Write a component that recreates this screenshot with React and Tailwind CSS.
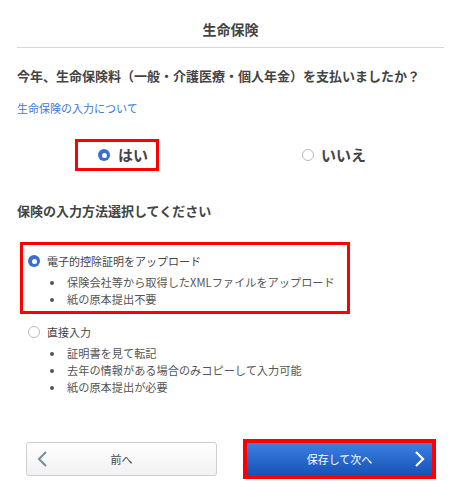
import React, { useState } from "react";

function Radio({ checked }) {
  return checked ? (
    <span className="inline-flex h-[12px] w-[12px] shrink-0 items-center justify-center rounded-full bg-[#3a6fd2]">
      <span className="h-[5px] w-[5px] rounded-full bg-white" />
    </span>
  ) : (
    <span className="inline-block h-[12px] w-[12px] shrink-0 rounded-full border border-[#b9b9b9] bg-white" />
  );
}

function Bullets({ items }) {
  return (
    <ul className="mt-[5px]">
      {items.map((t) => (
        <li key={t} className="flex h-[17px] items-center text-[11.2px] text-[#555]">
          <span className="ml-[30px] mr-[13px] h-[4px] w-[4px] rounded-full bg-[#555]" />
          {t}
        </li>
      ))}
    </ul>
  );
}

export default function App() {
  const [paid, setPaid] = useState(true);
  const [method, setMethod] = useState("upload");

  return (
    <div className="h-[485px] w-[450px] overflow-hidden bg-white font-['Noto_Sans_CJK_JP',sans-serif] text-[#444]">
      {/* header */}
      <div className="ml-[17px] mr-[6px] border-b border-[#d6d6d6] pt-[19px] pb-[8px] text-center">
        <h1 className="text-[14px] leading-[20px] font-bold">生命保険</h1>
      </div>

      <div className="px-[17px]">
        <p className="mt-[18px] text-[13px] leading-[20px] font-bold">
          今年、生命保険料（一般・介護医療・個人年金）を支払いましたか？
        </p>
        <a className="mt-[14px] block text-[11px] leading-[16px] text-[#3b78d8]">
          生命保険の入力について
        </a>
      </div>

      {/* yes / no */}
      <div className="mt-[23px] flex items-center">
        <button
          onClick={() => setPaid(true)}
          className="ml-[75px] flex h-[32px] w-[84px] items-center gap-[8px] border-[3px] border-[#ff0000] pl-[20px]"
        >
          <Radio checked={paid} />
          <span className="text-[15px] font-bold">はい</span>
        </button>
        <button onClick={() => setPaid(false)} className="ml-[143px] flex items-center gap-[7px]">
          <Radio checked={!paid} />
          <span className="text-[15px] font-bold">いいえ</span>
        </button>
      </div>

      <p className="mx-[17px] mt-[31px] text-[13px] leading-[18px] font-bold">
        保険の入力方法選択してください
      </p>

      {/* method */}
      <div
        onClick={() => setMethod("upload")}
        className="mt-[22px] ml-[20px] h-[72px] w-[330px] border-[3px] border-[#ff0000] pt-[8px]"
      >
        <div className="flex h-[16px] items-center gap-[7px] pl-[5px] text-[11px] text-[#444]">
          <Radio checked={method === "upload"} />
          電子的控除証明をアップロード
        </div>
        <div className="-ml-[3px]">
          <Bullets items={["保険会社等から取得したXMLファイルをアップロード", "紙の原本提出不要"]} />
        </div>
      </div>

      <div onClick={() => setMethod("manual")} className="mt-[10px] ml-[23px]">
        <div className="flex h-[16px] items-center gap-[7px] pl-[5px] text-[11px] text-[#444]">
          <Radio checked={method === "manual"} />
          直接入力
        </div>
        <div className="mt-[1px] -ml-[3px]">
          <Bullets
            items={["証明書を見て転記", "去年の情報がある場合のみコピーして入力可能", "紙の原本提出が必要"]}
          />
        </div>
      </div>

      {/* buttons */}
      <div className="mt-[43px] flex items-center">
        <button className="relative ml-[26px] h-[34px] w-[191px] rounded-[3px] border border-[#cfcfcf] bg-gradient-to-b from-white to-[#f0f1f3] text-[11px] text-[#444]">
          <svg
            className="absolute top-1/2 left-[10px] -translate-y-1/2"
            width="11"
            height="16"
            viewBox="0 0 11 16"
            fill="none"
            stroke="#7d8a99"
            strokeWidth="2"
          >
            <path d="M9 1 L2 8 L9 15" />
          </svg>
          前へ
        </button>
        <div className="ml-[26px] border-[4px] border-[#ff0000]">
          <button className="relative h-[32px] w-[185px] bg-gradient-to-b from-[#3c80e4] to-[#1653b6] text-[11px] text-white">
            保存して次へ
            <svg
              className="absolute top-1/2 right-[7px] -translate-y-1/2"
              width="11"
              height="16"
              viewBox="0 0 11 16"
              fill="none"
              stroke="#ffffff"
              strokeWidth="2.2"
            >
              <path d="M2 1 L9 8 L2 15" />
            </svg>
          </button>
        </div>
      </div>
    </div>
  );
}
